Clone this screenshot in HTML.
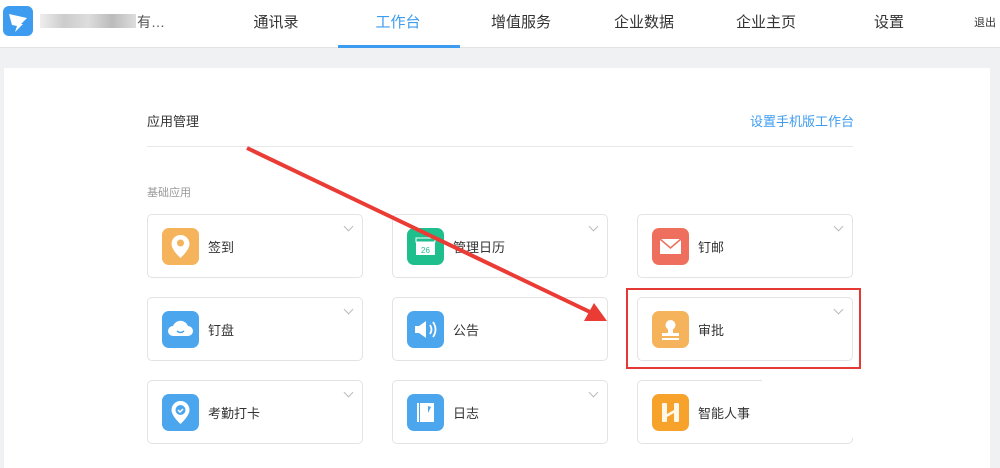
<!DOCTYPE html>
<html><head><meta charset="utf-8"><style>
*{margin:0;padding:0;box-sizing:border-box}
body{width:1000px;height:461px;overflow:hidden;background:#f0f1f3;font-family:"Liberation Sans","Noto Sans CJK SC",sans-serif;position:relative;color:#333}
.hdr{position:absolute;left:0;top:0;width:1000px;height:48px;background:#fff;border-bottom:1px solid #e3e3e3}
.nav{position:absolute;top:11px;font-size:15px;color:#333;transform:translateX(-50%)}
.panel{position:absolute;left:4px;top:68px;width:986px;height:400px;background:#fff}
.card{position:absolute;width:216px;height:64px;border:1px solid #e3e3e3;border-radius:5px;background:#fff}
.ic{position:absolute;left:14px;top:13px;width:37px;height:37px;border-radius:7px}
.lb{position:absolute;left:60px;top:22px;font-size:13px;color:#333}
.ch{position:absolute;right:10px;top:8px;width:7px;height:7px;border-right:1px solid #bbb;border-bottom:1px solid #bbb;transform:rotate(45deg)}
</style></head><body>
<div class="hdr">
<div style="position:absolute;left:3px;top:6px;width:30px;height:30px;border-radius:6px;background:#3d9cf0"></div>
<svg style="position:absolute;left:3px;top:6px" width="30" height="30"><path d="M6 8 L24 12 L18 18 L20 18 L12 26 L14 20 L9 19 Z" fill="#fff"/></svg>
<div style="position:absolute;left:40px;top:14px;width:96px;height:14px;background:linear-gradient(90deg,#eee,#ccc,#ddd,#bbb,#ddd);"></div>
<div style="position:absolute;left:137px;top:12px;font-size:14px;color:#555">有…</div>
<div class="nav" style="left:276px">通讯录</div>
<div class="nav" style="left:398px;color:#3d9cf0">工作台</div>
<div style="position:absolute;left:338px;top:45px;width:122px;height:3px;background:#3d9cf0"></div>
<div class="nav" style="left:521px">增值服务</div>
<div class="nav" style="left:644px">企业数据</div>
<div class="nav" style="left:766px">企业主页</div>
<div class="nav" style="left:889px">设置</div>
<div style="position:absolute;left:974px;top:14px;font-size:11px;color:#333">退出</div>
</div>
<div class="panel"></div>
<div style="position:absolute;left:147px;top:111px;font-size:13px">应用管理</div>
<div style="position:absolute;left:750px;top:111px;font-size:13px;color:#3d9cf0">设置手机版工作台</div>
<div style="position:absolute;left:147px;top:146px;width:706px;height:1px;background:#e8e8e8"></div>
<div style="position:absolute;left:147px;top:184px;font-size:11px;color:#999">基础应用</div>

<div class="card" style="left:147px;top:214px"><div class="ic" style="background:#f5b35c"></div><svg class="ic" viewBox="0 0 37 37"><path d="M18.5 7a9 9 0 0 0-9 9c0 6 9 14 9 14s9-8 9-14a9 9 0 0 0-9-9z" fill="#fff"/><circle cx="18.5" cy="15" r="3.5" fill="#f5b35c"/></svg><div class="lb">签到</div><div class="ch"></div></div>
<div class="card" style="left:392px;top:214px"><div class="ic" style="background:#1fbe8d"></div><svg class="ic" viewBox="0 0 37 37"><rect x="9" y="10" width="19" height="17" fill="#fff"/><rect x="9" y="10" width="19" height="4" fill="#1fbe8d" stroke="#fff"/><text x="18.5" y="25" font-size="8" text-anchor="middle" fill="#1fbe8d" font-family="Liberation Sans">26</text></svg><div class="lb">管理日历</div><div class="ch"></div></div>
<div class="card" style="left:637px;top:214px"><div class="ic" style="background:#ef6f5e"></div><svg class="ic" viewBox="0 0 37 37"><rect x="8" y="11" width="21" height="15" fill="#fff"/><path d="M8 11l10.5 9L29 11" fill="none" stroke="#ef6f5e" stroke-width="1.5"/></svg><div class="lb">钉邮</div><div class="ch"></div></div>

<div class="card" style="left:147px;top:297px"><div class="ic" style="background:#4ba6ee"></div><svg class="ic" viewBox="0 0 37 37"><path d="M11 25a5 5 0 0 1 0-10a8 8 0 0 1 15 0a5 5 0 0 1 0 10z" fill="#fff"/><path d="M15 20q3.5 3 7 0" stroke="#4ba6ee" fill="none" stroke-width="1.5"/></svg><div class="lb">钉盘</div><div class="ch"></div></div>
<div class="card" style="left:392px;top:297px"><div class="ic" style="background:#4ba6ee"></div><svg class="ic" viewBox="0 0 37 37"><path d="M8 15h4l7-5v17l-7-5H8z" fill="#fff"/><path d="M23 14q3 4.5 0 9M26 11q5 7.5 0 15" stroke="#fff" fill="none" stroke-width="1.8"/></svg><div class="lb">公告</div></div>
<div class="card" style="left:637px;top:297px"><div class="ic" style="background:#f5b35c"></div><svg class="ic" viewBox="0 0 37 37"><circle cx="18.5" cy="14" r="5" fill="#fff"/><path d="M16 18h5v4h6v3H10v-3h6z" fill="#fff"/><rect x="10" y="27" width="17" height="2" fill="#fff"/></svg><div class="lb">审批</div><div class="ch"></div></div>

<div class="card" style="left:147px;top:380px"><div class="ic" style="background:#4ba6ee"></div><svg class="ic" viewBox="0 0 37 37"><path d="M18.5 7a9 9 0 0 0-9 9c0 6 9 14 9 14s9-8 9-14a9 9 0 0 0-9-9z" fill="#fff"/><circle cx="18.5" cy="16" r="5" fill="#4ba6ee"/><path d="M16 16l2 2l3-3" stroke="#fff" fill="none" stroke-width="1.5"/></svg><div class="lb">考勤打卡</div><div class="ch"></div></div>
<div class="card" style="left:392px;top:380px"><div class="ic" style="background:#4ba6ee"></div><svg class="ic" viewBox="0 0 37 37"><rect x="10" y="9" width="17" height="19" fill="#fff"/><rect x="12" y="9" width="1" height="19" fill="#4ba6ee"/><path d="M21 12l3 1l-3 6z" fill="#4ba6ee"/></svg><div class="lb">日志</div><div class="ch"></div></div>
<div class="card" style="left:637px;top:380px"><div class="ic" style="background:#f7a22a"></div><svg class="ic" viewBox="0 0 37 37"><rect x="10" y="9" width="5" height="19" rx="1" fill="#fff8e8"/><rect x="22" y="9" width="5" height="19" rx="1" fill="#fff8e8"/><path d="M15 20l7-4v3l-7 4z" fill="#fff8e8"/></svg><div class="lb">智能人事</div></div>
<div style="position:absolute;left:762px;top:378px;width:180px;height:60px;background:#fff;opacity:.95"></div>

<div style="position:absolute;left:626px;top:288px;width:235px;height:81px;border:2px solid #e53935"></div>
<svg style="position:absolute;left:0;top:0" width="1000" height="461"><line x1="247" y1="148" x2="590" y2="312" stroke="#ea3b35" stroke-width="4"/><path d="M607 321L584 321L594 303z" fill="#ea3b35"/></svg>
</body></html>
